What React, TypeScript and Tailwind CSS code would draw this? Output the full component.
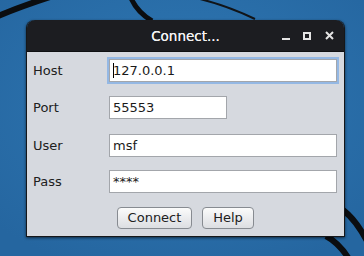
import React from "react";

const font = { fontFamily: '"DejaVu Sans", Verdana, sans-serif' };

function Field({ value, focused, width }: { value: string; focused?: boolean; width: string }) {
    return (
        <div
            className={`${width} h-[23px] bg-white border border-[#a3a6ab] flex items-center pl-[3px] text-[13px] text-[#1a1a1a] ${focused ? "shadow-[0_0_0_2px_#94b8e4]" : ""}`}
        >
            {focused && <span className="w-px h-[15px] bg-black -mr-px" />}
            {value}
        </div>
    );
}

function Row({ label, children, className }: { label: string; children: React.ReactNode; className?: string }) {
    return (
        <div className={`flex items-center ${className ?? ""}`}>
            <div className="w-[82px] pl-[6px] text-[13px] text-[#202020]">{label}</div>
            {children}
        </div>
    );
}

function Btn({ label, width }: { label: string; width: string }) {
    return (
        <button className={`${width} h-[22px] rounded-[4px] border border-[#878b91] bg-gradient-to-b from-[#fbfbfb] to-[#dcdee2] text-[13px] text-[#202020] flex items-center justify-center`}>
            {label}
        </button>
    );
}

export default function App() {
    return (
        <div className="relative w-[364px] h-[256px] overflow-hidden bg-[#2a6ea8]" style={font}>
            {/* desktop wallpaper lines */}
            <svg className="absolute inset-0" width="364" height="256" viewBox="0 0 364 256">
                <defs>
                    <radialGradient id="bg" cx="50%" cy="40%" r="70%">
                        <stop offset="0%" stopColor="#2f78b4" />
                        <stop offset="100%" stopColor="#2566a0" />
                    </radialGradient>
                </defs>
                <rect width="364" height="256" fill="url(#bg)" />
                <path d="M-2,16 Q22,6 50,-3" stroke="#0b0d10" strokeWidth="6" fill="none" />
                <path d="M131,-2 Q137,12 152,21" stroke="#0b0d10" strokeWidth="5" fill="none" />
                <path d="M200,-1 Q228,6 255,19" stroke="#111418" strokeWidth="2" fill="none" />
                <path d="M343,210 Q356,220 367,241" stroke="#0b0d10" strokeWidth="6" fill="none" />
                <path d="M326,236 Q339,243 349,259" stroke="#0b0d10" strokeWidth="6" fill="none" />
            </svg>

            <div className="relative ml-[26px] mt-[20px] w-[319px] rounded-t-[8px] border border-[#15171a] border-t-0 shadow-[0_1px_3px_rgba(0,0,0,0.6)]">
                <div className="h-[31px] rounded-t-[8px] bg-[#1c1d21] flex items-center relative">
                    <div className="flex-1 text-center text-[#f2f2f2] text-[13.5px] pt-[2px] [text-shadow:0_0_0.4px_#fff]">Connect...</div>
                    <div className="absolute right-0 top-0 h-full flex items-center">
                        <div className="w-[8px] h-[2px] bg-[#e4e4e4] mt-[7px] mr-[13px]" />
                        <div className="w-[8px] h-[8px] border-2 border-[#e4e4e4] mr-[14px]" />
                        <svg width="9" height="9" viewBox="0 0 9 9" className="mr-[10px]">
                            <path d="M1,1 L8,8 M8,1 L1,8" stroke="#e4e4e4" strokeWidth="2" />
                        </svg>
                    </div>
                </div>
                <div className="border-t border-[#0f1012] bg-[#d6d9df] pt-[7px] pb-[7px] pr-[6px]">
                    <Row label="Host">
                        <Field value="127.0.0.1" focused width="w-[228px]" />
                    </Row>
                    <Row label="Port" className="mt-[14px]">
                        <Field value="55553" width="w-[118px]" />
                    </Row>
                    <Row label="User" className="mt-[15px]">
                        <Field value="msf" width="w-[228px]" />
                    </Row>
                    <Row label="Pass" className="mt-[13px]">
                        <Field value="****" width="w-[228px]" />
                    </Row>
                    <div className="flex justify-center gap-[10px] mt-[14px] pl-[6px]">
                        <Btn label="Connect" width="w-[75px]" />
                        <Btn label="Help" width="w-[52px]" />
                    </div>
                </div>
            </div>
        </div>
    );
}
